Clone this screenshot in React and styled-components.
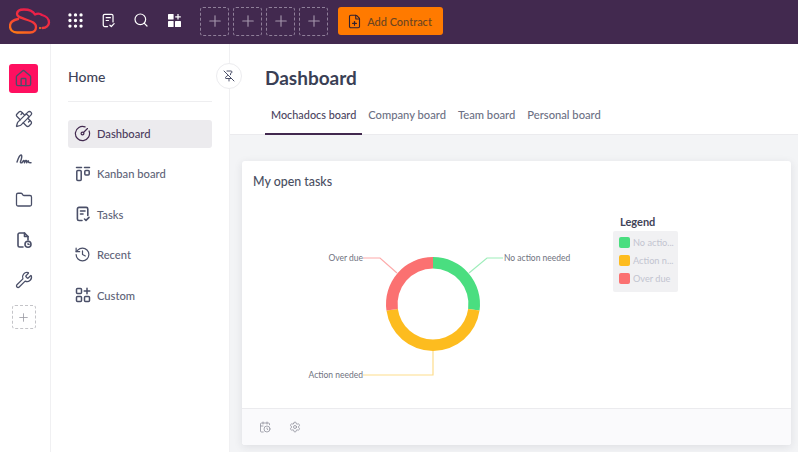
import React from "react";
import styled, { createGlobalStyle } from "styled-components";
import {
  Grip,
  Search,
  Plus,
  FilePlus,
  Home,
  PencilRuler,
  Folder,
  Wrench,
  CircleGauge,
  History,
  PinOff,
  CalendarClock,
  Settings,
} from "lucide-react";

const GlobalStyle = createGlobalStyle`
  html, body {
    margin: 0;
    padding: 0;
    height: 100%;
    overflow: hidden;
    background: #fff;
    font-family: "Lato", "Noto Sans", sans-serif;
  }
  * { box-sizing: border-box; }
`;

const Page = styled.div`
  width: 798px;
  height: 452px;
  display: flex;
  flex-direction: column;
  overflow: hidden;
`;

const TopBar = styled.header`
  height: 44px;
  flex: none;
  background: #42294f;
  display: flex;
  align-items: center;
  padding: 0 0 2px 9px;
`;

const TopIcons = styled.div`
  display: flex;
  align-items: center;
  gap: 13px;
  margin: 0 16px 2px 14px;
  color: #fff;
`;

const TopIcon = styled.span`
  width: 20px;
  height: 20px;
  display: flex;
  align-items: center;
  justify-content: center;
`;

const EmptySlot = styled.div`
  width: ${({ $size }) => $size || 29}px;
  height: ${({ $size }) => $size || 29}px;
  flex: none;
  border: 1px dashed ${({ $light }) => ($light ? "#c4c4c8" : "#8f7f99")};
  border-radius: 3px;
  display: flex;
  align-items: center;
  justify-content: center;
  color: ${({ $light }) => ($light ? "#9a9aa2" : "#a597ad")};
`;

const Slots = styled.div`
  display: flex;
  gap: 4px;
`;

const AddButton = styled.button`
  width: 105px;
  height: 28px;
  margin-left: 10px;
  border: 0;
  border-radius: 3px;
  background: #ff7a00;
  color: #6b4420;
  font: 500 11px "Lato", sans-serif;
  display: flex;
  align-items: center;
  justify-content: center;
  gap: 5px;
  padding: 0 2px 0 0;
  svg { color: #2f2030; }
`;

const Body = styled.div`
  flex: 1;
  display: flex;
  min-height: 0;
`;

const Rail = styled.nav`
  width: 51px;
  flex: none;
  border-right: 1px solid #f0f0f2;
  display: flex;
  flex-direction: column;
  align-items: center;
  padding: 20px 3px 0 0;
`;

const RailItem = styled.div`
  width: 29px;
  height: 29px;
  margin-bottom: 11.4px;
  border-radius: 3px;
  display: flex;
  align-items: center;
  justify-content: center;
  color: #4a4f68;
  background: ${({ $active }) => ($active ? "#ff1060" : "transparent")};
`;

const RailAdd = styled.div`
  margin-top: -1px;
`;

const Sidebar = styled.aside`
  width: 179px;
  flex: none;
  position: relative;
  border-right: 1px solid #f0f0f2;
  padding: 0 17px;
`;

const SidebarTitle = styled.h2`
  margin: 0;
  height: 58px;
  padding-top: 24px;
  border-bottom: 1px solid #eeeef0;
  font-size: 14px;
  line-height: 18px;
  font-weight: 500;
  color: #3f4358;
`;

const MenuList = styled.div`
  margin-top: 17.5px;
  display: flex;
  flex-direction: column;
  gap: 12.4px;
`;

const MenuItem = styled.div`
  height: 28px;
  border-radius: 3px;
  padding-left: 6px;
  display: flex;
  align-items: center;
  font-size: 11.2px;
  font-weight: 500;
  color: ${({ $active }) => ($active ? "#4a3a5c" : "#5e6378")};
  background: ${({ $active }) => ($active ? "#ecebee" : "transparent")};
`;

const MenuIcon = styled.span`
  width: 17px;
  margin-right: 6px;
  flex: none;
  display: flex;
  justify-content: center;
  color: ${({ $active }) => ($active ? "#42294f" : "#4a4f68")};
`;

const PinButton = styled.button`
  position: absolute;
  top: 19px;
  right: -13px;
  width: 26px;
  height: 26px;
  padding: 0;
  border: 1px solid #ececef;
  border-radius: 50%;
  background: #fff;
  color: #4a4f68;
  display: flex;
  align-items: center;
  justify-content: center;
`;

const Main = styled.main`
  flex: 1;
  min-width: 0;
  display: flex;
  flex-direction: column;
  background: #f3f4f6;
`;

const MainHeader = styled.div`
  height: 91px;
  flex: none;
  background: #fff;
  border-bottom: 1px solid #ebebee;
  padding: 21px 0 0 35px;
`;

const Heading = styled.h1`
  margin: 0;
  font-size: 19px;
  line-height: 26px;
  font-weight: 700;
  color: #3a3f55;
`;

const Tabs = styled.div`
  margin-top: 10px;
  display: flex;
`;

const Tab = styled.div`
  height: 34px;
  padding: 0 6px 6px;
  display: flex;
  align-items: center;
  font-size: ${({ $active }) => ($active ? "10.85px" : "11.2px")};
  font-weight: 500;
  color: ${({ $active }) => ($active ? "#4c4560" : "#6c7084")};
  border-bottom: 2px solid ${({ $active }) => ($active ? "#42294f" : "transparent")};
`;

const Content = styled.div`
  flex: 1;
  padding: 26px 7px 7px 12px;
  min-height: 0;
`;

const Card = styled.section`
  height: 284px;
  background: #fff;
  border-radius: 3px;
  box-shadow: 0 2px 8px rgba(40, 40, 60, 0.1);
  display: flex;
  flex-direction: column;
`;

const CardTitle = styled.h3`
  margin: 0;
  height: 40px;
  flex: none;
  padding: 13px 0 0 11px;
  font-size: 12.4px;
  line-height: 16px;
  font-weight: 500;
  color: #4a4f62;
`;

const CardBody = styled.div`
  flex: 1;
  display: flex;
  align-items: flex-start;
  min-height: 0;
`;

const Legend = styled.div`
  width: 65px;
  flex: none;
  margin-top: 14px;
`;

const LegendTitle = styled.div`
  padding-left: 7px;
  font-size: 11px;
  line-height: 14px;
  font-weight: 700;
  color: #3f4358;
`;

const LegendBox = styled.div`
  margin-top: 2px;
  height: 61px;
  border-radius: 2px;
  background: #f1f1f3;
  padding: 6px;
  display: flex;
  flex-direction: column;
  gap: 7px;
`;

const LegendRow = styled.div`
  display: flex;
  align-items: center;
  gap: 3px;
  height: 11px;
  font-size: 9.2px;
  color: #c2c4d0;
  white-space: nowrap;
`;

const Swatch = styled.span`
  width: 11px;
  height: 11px;
  flex: none;
  border-radius: 2px;
  background: ${({ $color }) => $color};
`;

const CardFooter = styled.div`
  height: 37px;
  flex: none;
  background: #fafafc;
  border-top: 1px solid #ebebee;
  border-radius: 0 0 3px 3px;
  padding-left: 17px;
  display: flex;
  align-items: center;
  gap: 18px;
  color: #8f909c;
`;

const ChartLabel = styled.text`
  font-family: "Lato", sans-serif;
  font-size: 8.5px;
  fill: #6f7280;
`;

const TasksIcon = ({ size = 16, strokeWidth = 1.6 }) => (
  <svg width={size} height={size} viewBox="0 0 16 16" fill="none" stroke="currentColor" strokeWidth={strokeWidth} strokeLinecap="round" strokeLinejoin="round">
    <path d="M7 14.5H4a1.6 1.6 0 0 1-1.6-1.6V3A1.6 1.6 0 0 1 4 1.4h7.2A1.6 1.6 0 0 1 12.8 3v6.5" />
    <path d="M5.5 5h4.5M5.5 8h2.5M9.5 13l1.5 1.4 3-3" />
  </svg>
);

const AppsPlusIcon = () => (
  <svg width="15" height="15" viewBox="0 0 15 15" fill="currentColor">
    <rect x="1" y="1" width="5.6" height="5.6" rx="0.6" />
    <rect x="1" y="8" width="5.6" height="6" rx="0.6" />
    <rect x="8" y="8" width="6" height="6" rx="0.6" />
    <path d="M10.4 1h1.2v2.2h2.2v1.2h-2.2v2.2h-1.2V4.4H8.2V3.2h2.2z" />
  </svg>
);

const KanbanIcon = () => (
  <svg width="16" height="16" viewBox="0 0 16 16" fill="none" stroke="currentColor" strokeWidth="1.5" strokeLinecap="round" strokeLinejoin="round">
    <path d="M1.5 1.5h5M9.5 1.5h5" />
    <rect x="1.8" y="4.5" width="4.4" height="10" rx="1" />
    <rect x="9.8" y="4.5" width="4.4" height="4.6" rx="1" />
  </svg>
);

const CustomIcon = () => (
  <svg width="16" height="16" viewBox="0 0 16 16" fill="none" stroke="currentColor" strokeWidth="1.5" strokeLinecap="round" strokeLinejoin="round">
    <rect x="1.5" y="1.5" width="5" height="5" rx="1" />
    <rect x="1.5" y="9.5" width="5" height="5" rx="1" />
    <rect x="9.5" y="9.5" width="5" height="5" rx="1" />
    <path d="M12 1.2v5.6M9.2 4h5.6" />
  </svg>
);

const ScrawlIcon = () => (
  <svg width="18" height="18" viewBox="0 0 18 18" fill="none" stroke="currentColor" strokeWidth="1.4" strokeLinecap="round" strokeLinejoin="round">
    <path d="M2 12C3 9 4.5 5 6 5 7.5 5 6.5 9 5.5 11.5 5 13 6.5 13.5 7.5 12 8.3 10.8 8.8 10 9.2 10.6L9.5 12.8C10 11.5 10.8 10 11.4 10.6L11.8 12.8C12.4 11.5 13 10.4 13.4 11L13.8 12.6 16 12.8" />
  </svg>
);

const FileTimeIcon = () => (
  <svg width="18" height="18" viewBox="0 0 18 18" fill="none" stroke="currentColor" strokeWidth="1.6" strokeLinecap="round" strokeLinejoin="round">
    <path d="M8 16H4.6A1.6 1.6 0 0 1 3 14.4V3.6A1.6 1.6 0 0 1 4.6 2H9.5L13 5.5V9" />
    <path d="M9.5 2v3.5H13" />
    <circle cx="13" cy="13.3" r="3" />
    <path d="M13 12v1.4h1.2" strokeWidth="1.1" />
  </svg>
);

const Logo = () => (
  <svg width="42" height="28" viewBox="0 0 42 28" fill="none" strokeLinecap="round" strokeLinejoin="round" style={{ flex: "none", marginBottom: "2px" }}>
    <defs>
      <linearGradient id="logoGrad" x1="0" y1="1" x2="0.7" y2="0">
        <stop offset="0" stopColor="#ff8010" />
        <stop offset="0.5" stopColor="#f5383a" />
        <stop offset="1" stopColor="#e8174e" />
      </linearGradient>
    </defs>
    <path
      d="M9 13C4 14 1 16 1 20 1 24 4 26.5 8 26.5H21C25 26.5 27 24 27 21 27 17 23 15.5 17 13.5 11 11.5 8 10.5 8 8 8 5 11 3.5 15 3.5 20 3.5 24 5 26 8.5 28 7.5 31 7.5 33 9 37 10 40 13 40 16.5 40 19.5 37 22 33.5 22"
      stroke="url(#logoGrad)"
      strokeWidth="2.3"
    />
    <circle cx="31" cy="22" r="1" fill="#ff8010" />
  </svg>
);

const cx = 191;
const cy = 103;

// clockwise from twelve o'clock
const pointAt = (r, deg) => {
  const a = ((deg - 90) * Math.PI) / 180;
  return `${(cx + r * Math.cos(a)).toFixed(2)} ${(cy + r * Math.sin(a)).toFixed(2)}`;
};

const arcPath = (from, to, outer = 47, inner = 35.5) => {
  const large = to - from > 180 ? 1 : 0;
  return `M${pointAt(outer, from)} A${outer} ${outer} 0 ${large} 1 ${pointAt(outer, to)} L${pointAt(inner, to)} A${inner} ${inner} 0 ${large} 0 ${pointAt(inner, from)} Z`;
};

const segments = [
  { label: "No action needed", short: "No actio...", color: "#4ade80", line: "#9eedba", from: 0, to: 98, points: "227,72 245,57 261,57", x: 262, y: 60, anchor: "start" },
  { label: "Action needed", short: "Action n...", color: "#fdbc1f", line: "#fedd8c", from: 98, to: 262, points: "191,150 191,174 121,174", x: 121, y: 177, anchor: "end" },
  { label: "Over due", short: "Over due", color: "#fb7171", line: "#fdaaaa", from: 262, to: 360, points: "155,72 138,57 121,57", x: 121, y: 60, anchor: "end" },
];

const Donut = () => (
  <svg width="371" height="207" viewBox="0 0 371 207" style={{ flex: "none" }}>
    {segments.map((s) => (
      <g key={s.label}>
        <polyline points={s.points} fill="none" stroke={s.line} strokeWidth="1.2" />
        <path d={arcPath(s.from, s.to)} fill={s.color} />
        <ChartLabel x={s.x} y={s.y} textAnchor={s.anchor}>{s.label}</ChartLabel>
      </g>
    ))}
  </svg>
);

const menu = [
  { label: "Dashboard", icon: <CircleGauge size={17} strokeWidth={1.7} />, active: true },
  { label: "Kanban board", icon: <KanbanIcon /> },
  { label: "Tasks", icon: <TasksIcon /> },
  { label: "Recent", icon: <History size={17} strokeWidth={1.7} /> },
  { label: "Custom", icon: <CustomIcon /> },
];

const tabs = ["Mochadocs board", "Company board", "Team board", "Personal board"];

export default function App() {
  return (
    <Page>
      <GlobalStyle />
      <TopBar>
        <Logo />
        <TopIcons>
          <TopIcon><Grip size={19} strokeWidth={2.2} /></TopIcon>
          <TopIcon><TasksIcon size={15} strokeWidth={1.3} /></TopIcon>
          <TopIcon><Search size={16} strokeWidth={1.8} /></TopIcon>
          <TopIcon><AppsPlusIcon /></TopIcon>
        </TopIcons>
        <Slots>
          {[0, 1, 2, 3].map((n) => (
            <EmptySlot key={n}><Plus size={18} strokeWidth={1.5} /></EmptySlot>
          ))}
        </Slots>
        <AddButton><FilePlus size={15} strokeWidth={1.8} />Add Contract</AddButton>
      </TopBar>
      <Body>
        <Rail>
          <RailItem $active><Home size={19} strokeWidth={1.7} /></RailItem>
          <RailItem><PencilRuler size={18} strokeWidth={1.7} /></RailItem>
          <RailItem><ScrawlIcon /></RailItem>
          <RailItem><Folder size={18} strokeWidth={1.7} /></RailItem>
          <RailItem><FileTimeIcon /></RailItem>
          <RailItem><Wrench size={18} strokeWidth={1.7} /></RailItem>
          <RailAdd>
            <EmptySlot $light $size={24}><Plus size={13} strokeWidth={1.5} /></EmptySlot>
          </RailAdd>
        </Rail>
        <Sidebar>
          <SidebarTitle>Home</SidebarTitle>
          <MenuList>
            {menu.map((item) => (
              <MenuItem key={item.label} $active={item.active}>
                <MenuIcon $active={item.active}>{item.icon}</MenuIcon>
                {item.label}
              </MenuItem>
            ))}
          </MenuList>
          <PinButton><PinOff size={12} strokeWidth={2} /></PinButton>
        </Sidebar>
        <Main>
          <MainHeader>
            <Heading>Dashboard</Heading>
            <Tabs>
              {tabs.map((t, i) => (
                <Tab key={t} $active={i === 0}>{t}</Tab>
              ))}
            </Tabs>
          </MainHeader>
          <Content>
            <Card>
              <CardTitle>My open tasks</CardTitle>
              <CardBody>
                <Donut />
                <Legend>
                  <LegendTitle>Legend</LegendTitle>
                  <LegendBox>
                    {segments.map((s) => (
                      <LegendRow key={s.label}>
                        <Swatch $color={s.color} />
                        {s.short}
                      </LegendRow>
                    ))}
                  </LegendBox>
                </Legend>
              </CardBody>
              <CardFooter>
                <CalendarClock size={12} strokeWidth={1.6} />
                <Settings size={12} strokeWidth={1.6} />
              </CardFooter>
            </Card>
          </Content>
        </Main>
      </Body>
    </Page>
  );
}
